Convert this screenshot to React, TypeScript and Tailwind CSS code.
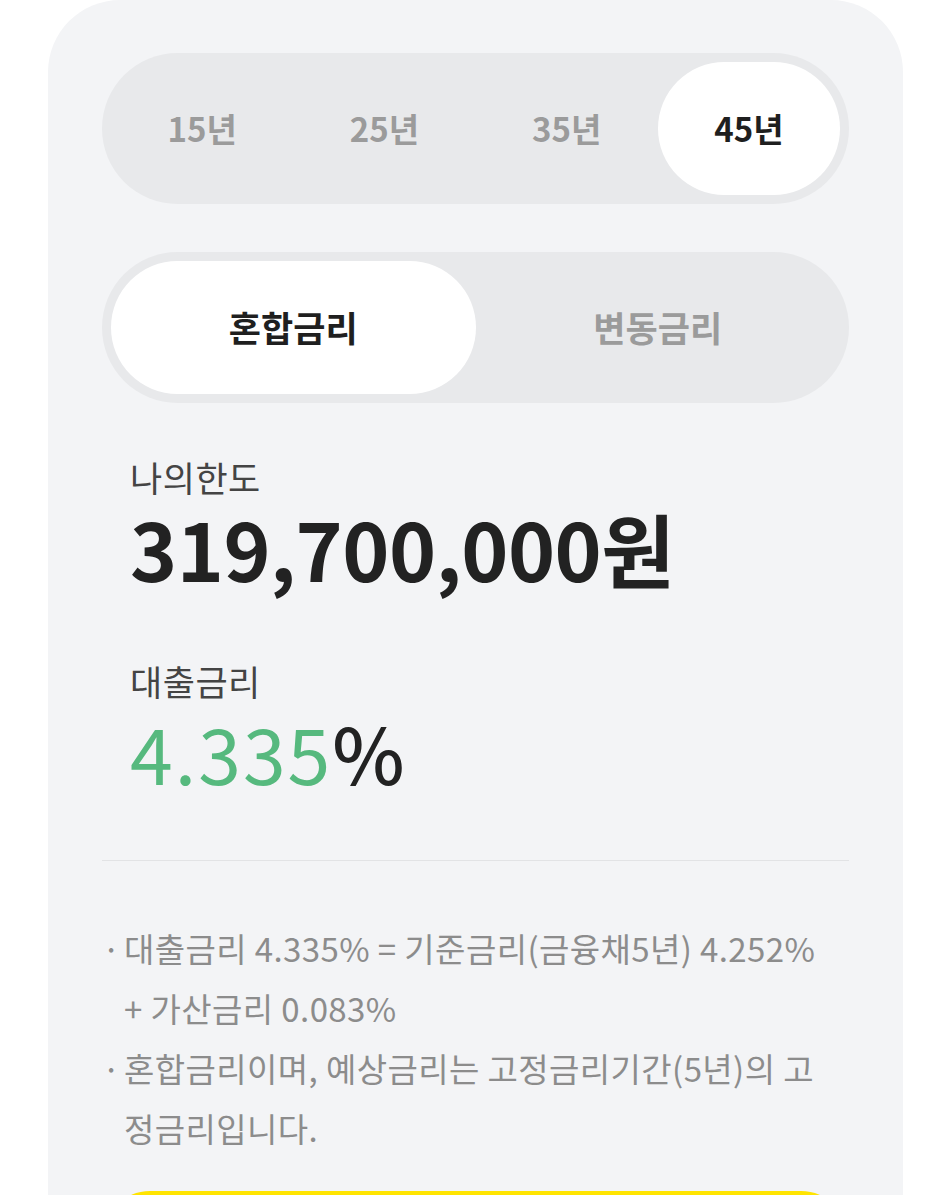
import { useState } from "react";

const periods = ["15년", "25년", "35년", "45년"];
const rateTypes = ["혼합금리", "변동금리"];

export default function App() {
  const [period, setPeriod] = useState("45년");
  const [rateType, setRateType] = useState("혼합금리");

  return (
    <div
      className="h-[1195px] overflow-hidden bg-white"
      style={{ fontFamily: '"Noto Sans CJK KR", "Noto Sans", sans-serif' }}
    >
      <div className="ml-[48px] w-[855px] rounded-t-[72px] bg-[#f3f4f6] px-[54px] pt-[53px] pb-10">
        <div className="grid h-[151px] grid-cols-4 rounded-full bg-[#e8e9eb] p-[9px]">
          {periods.map((p) => (
            <button
              key={p}
              onClick={() => setPeriod(p)}
              className={
                period === p
                  ? "rounded-full bg-white text-[33px] font-bold text-[#1f1f1f]"
                  : "rounded-full text-[33px] font-bold text-[#9b9b9b]"
              }
            >
              {p}
            </button>
          ))}
        </div>

        <div className="mt-[48px] grid h-[151px] grid-cols-2 rounded-full bg-[#e8e9eb] p-[9px]">
          {rateTypes.map((r) => (
            <button
              key={r}
              onClick={() => setRateType(r)}
              className={
                rateType === r
                  ? "rounded-full bg-white text-[35px] font-bold text-[#1f1f1f]"
                  : "rounded-full text-[35px] font-bold text-[#9b9b9b]"
              }
            >
              {r}
            </button>
          ))}
        </div>

        <div className="mt-[50px] px-[28px]">
          <div className="text-[35px] leading-[48px] tracking-[0.5px] text-[#444444]">나의한도</div>
          <div className="mt-[6px] text-[80px] font-bold leading-[80px] tracking-[-0.5px] text-[#222222]">
            319,700,000원
          </div>

          <div className="mt-[70px] text-[35px] leading-[48px] tracking-[0.5px] text-[#444444]">
            대출금리
          </div>
          <div className="mt-[8px] text-[77px] leading-[77px] tracking-[2px]">
            <span className="text-[#56b97e]">4.335</span>
            <span className="font-medium text-[#222222]">%</span>
          </div>
        </div>

        <div className="mt-[70px] h-px bg-[#e2e3e5]" />

        <ul className="mt-[57px] text-[33px] leading-[60px] tracking-[0.4px] text-[#8c8c8c]">
          <li className="flex">
            <span className="w-[22px] shrink-0">·</span>
            <span className="whitespace-nowrap">
              대출금리 4.335% = 기준금리(금융채5년) 4.252%
              <br />+ 가산금리 0.083%
            </span>
          </li>
          <li className="flex">
            <span className="w-[22px] shrink-0">·</span>
            <span className="whitespace-nowrap">
              혼합금리이며, 예상금리는 고정금리기간(5년)의 고
              <br />
              정금리입니다.
            </span>
          </li>
        </ul>

        <button className="mt-[33px] h-[130px] w-full rounded-[48px] bg-[#ffe400] text-[34px] font-bold text-[#222222]">
          대출 신청하기
        </button>
      </div>
    </div>
  );
}
